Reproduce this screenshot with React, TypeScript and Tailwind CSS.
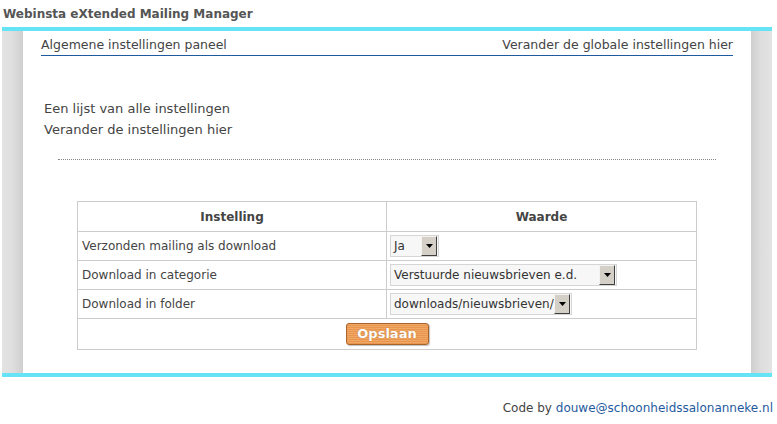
import React from "react";

const font = { fontFamily: '"Comic Sans MS", "DejaVu Sans", sans-serif' };

function Arrow() {
  return (
    <div className="flex h-[20px] w-[16px] items-center justify-center border border-t-[#f4f3ef] border-l-[#f4f3ef] border-r-[#404040] border-b-[#404040] bg-[#d4d0c8]">
      <svg width="7" height="4" viewBox="0 0 7 4">
        <polygon points="0,0 7,0 3.5,4" fill="#000" />
      </svg>
    </div>
  );
}

function Select({ value, width }: { value: string; width: string }) {
  return (
    <div className={`flex h-[22px] items-center justify-between border border-[#d6d6d6] bg-[#f7f7f7] pl-[3px] pr-[1px] ${width}`}>
      <span className="text-[12px] text-[#333]">{value}</span>
      <Arrow />
    </div>
  );
}

export default function App() {
  return (
    <div className="min-h-[424px] w-[777px] bg-white text-[#444]" style={font}>
      <div className="ml-[2px] w-[770px]">
        <div className="flex h-[27px] items-center pl-[1px] text-[12px] font-bold text-[#555]">
          Webinsta eXtended Mailing Manager
        </div>
        <div className="grid grid-cols-[21px_1fr_21px] border-t-4 border-b-4 border-[#66e3f4]">
          <div className="bg-gradient-to-r from-[#e4e3e3] via-[#dfdede] to-[#cfcfcf]" />
          <div className="h-[342px] bg-white px-[18px]">
            <div className="flex items-end justify-between border-b border-[#1f5aa0] pt-[5px] pb-[2px] text-[12.5px] leading-[17px]">
              <span>Algemene instellingen paneel</span>
              <span>Verander de globale instellingen hier</span>
            </div>
            <div className="mt-[42px] pl-[3px] text-[13px] leading-[21px]">
              <div>Een lijst van alle instellingen</div>
              <div>Verander de instellingen hier</div>
            </div>
            <div className="mx-[17px] mt-[19px] border-t border-dotted border-[#888]" />
            <div className="mx-[36px] mt-[41px]">
              <table className="w-full border-collapse border border-[#ccc] text-[12px]">
                <tbody>
                  <tr className="h-[30px]">
                    <th className="w-[309px] border border-[#ccc] text-center font-bold text-[#444]">Instelling</th>
                    <th className="border border-[#ccc] text-center font-bold text-[#444]">Waarde</th>
                  </tr>
                  <tr className="h-[29px]">
                    <td className="border border-[#ccc] pl-[4px]">Verzonden mailing als download</td>
                    <td className="border border-[#ccc] pl-[3px]">
                      <Select value="Ja" width="w-[49px]" />
                    </td>
                  </tr>
                  <tr className="h-[29px]">
                    <td className="border border-[#ccc] pl-[4px]">Download in categorie</td>
                    <td className="border border-[#ccc] pl-[3px]">
                      <Select value="Verstuurde nieuwsbrieven e.d." width="w-[227px]" />
                    </td>
                  </tr>
                  <tr className="h-[29px]">
                    <td className="border border-[#ccc] pl-[4px]">Download in folder</td>
                    <td className="border border-[#ccc] pl-[3px]">
                      <Select value="downloads/nieuwsbrieven/" width="w-[182px]" />
                    </td>
                  </tr>
                  <tr className="h-[31px]">
                    <td colSpan={2} className="border border-[#ccc] text-center">
                      <button
                        className="inline-flex h-[22px] w-[83px] items-center justify-center rounded-[3px] border border-[#a8642a] bg-[repeating-linear-gradient(180deg,#f2a865_0px,#f2a865_1px,#e89550_1px,#e89550_2px)] text-[13px] font-bold text-white shadow-[1px_1px_1px_rgba(0,0,0,0.25)]"
                        style={{ ...font, textShadow: "0 0 1px #a0602a" }}
                      >
                        Opslaan
                      </button>
                    </td>
                  </tr>
                </tbody>
              </table>
            </div>
          </div>
          <div className="bg-gradient-to-r from-[#cfcfcf] via-[#dfdede] to-[#e4e3e3]" />
        </div>
        <div className="mt-[22px] pr-0 text-right text-[12px] text-[#444]" style={{ marginRight: -1 }}>
          Code by <span className="text-[#1f5aa0]">douwe@schoonheidssalonanneke.nl</span>
        </div>
      </div>
    </div>
  );
}
